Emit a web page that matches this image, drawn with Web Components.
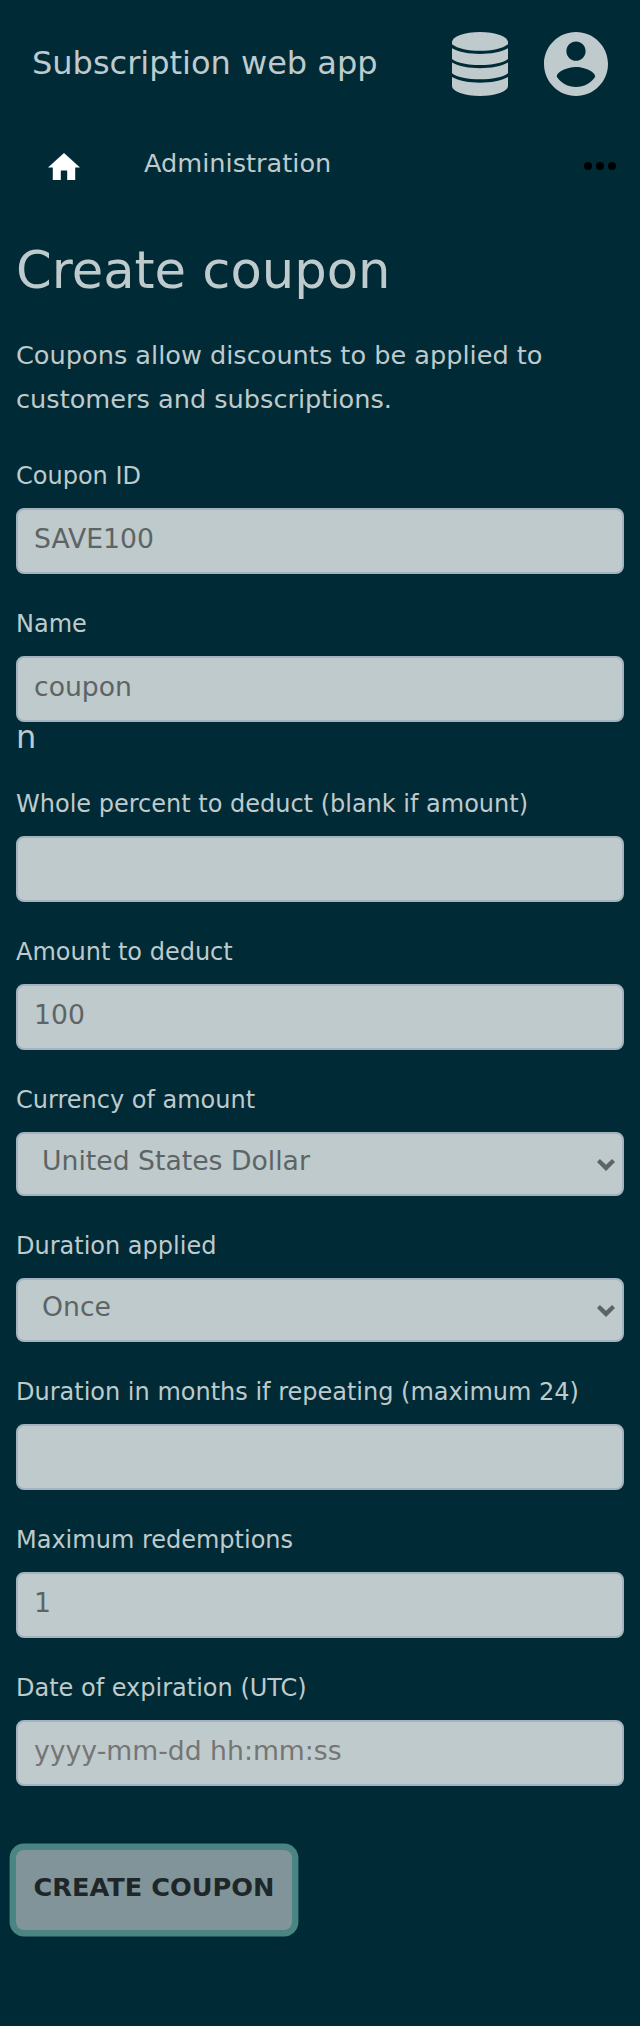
<!DOCTYPE html>
<html lang="en">
<head>
<meta charset="utf-8">
<title>Create coupon</title>
<style>
html{background:#002b36}
body{margin:0;background:#002b36;color:#bfcacc;font-family:"DejaVu Sans",sans-serif}
</style>
</head>
<body>
<coupon-page></coupon-page>
<script>
class Base extends HTMLElement{
  constructor(){
    super();
    this.attachShadow({mode:'open'}).innerHTML=this.constructor.html;
  }
}
customElements.define('app-icon',class extends HTMLElement{
  connectedCallback(){
    if(this.shadowRoot)return;
    const icons={
      database:['0 0 56 64','<path d="M0 10A28 10 0 0 1 56 10V12.200C45 21 11 21 0 12.200Z"/><path d="M0 16.300C13 23.900 43 23.900 56 16.300V27C46 35 10 35 0 27Z"/><path d="M0 30.600C13 38.200 43 38.200 56 30.600V41.300C46 49.300 10 49.300 0 41.300Z"/><path d="M0 45C13 52.600 43 52.600 56 45V54A28 10 0 0 1 0 54Z"/>'],
      account:['2 2 20 20','<path d="M12 2C6.480 2 2 6.480 2 12s4.480 10 10 10 10-4.480 10-10S17.520 2 12 2zm0 3c1.660 0 3 1.340 3 3s-1.340 3-3 3-3-1.340-3-3 1.340-3 3-3zm0 14.200c-2.500 0-4.710-1.280-6-3.220.03-1.990 4-3.080 6-3.080 1.990 0 5.970 1.090 6 3.080-1.290 1.940-3.500 3.220-6 3.220z"/>'],
      home:['2 3 20 17','<path d="M10 20v-6h4v6h5v-8h3L12 3 2 12h3v8z"/>'],
      more:['0 0 32 8','<circle cx="4" cy="4" r="4"/><circle cx="16" cy="4" r="4"/><circle cx="28" cy="4" r="4"/>'],
      chevron:['0 0 18 12','<path d="M0 3 2.900 0 9 5.700 15.100 0 18 3 9 12Z"/>']
    };
    const [box,shape]=icons[this.getAttribute('name')];
    this.attachShadow({mode:'open'}).innerHTML=`<style>:host{display:block;flex:none}svg{display:block;width:100%;height:100%;fill:currentColor}</style><svg viewBox="${box}" preserveAspectRatio="none" aria-hidden="true">${shape}</svg>`;
  }
});
customElements.define('app-header',class extends Base{
  static html=`<style>
  :host{display:flex;align-items:center;height:128px;padding:0 32px;box-sizing:border-box}
  .title{flex:1;font-size:32px;line-height:126px;height:128px}
  .db{width:56px;height:64px;margin-right:36px}.acc{width:64px;height:64px}
  </style><div class="title"><slot></slot></div><app-icon class="db" name="database"></app-icon><app-icon class="acc" name="account"></app-icon>`;
});
customElements.define('app-nav',class extends Base{
  static html=`<style>
  :host{display:flex;height:72px;padding:0 24px 0 48px;box-sizing:border-box}
  .home{width:32px;height:27.2px;color:#fff;margin-top:24.8px}
  .link{flex:1;margin-left:64px;font-size:25.6px;line-height:70px}
  .more{width:32px;height:8px;color:#000;margin-top:34px}
  </style><app-icon class="home" name="home"></app-icon><div class="link"><slot></slot></div><app-icon class="more" name="more"></app-icon>`;
});
customElements.define('form-field',class extends Base{
  static html=`<style>
  :host{display:block;margin-bottom:28px}
  .label{font-size:24px;line-height:44px;height:54px}
  .box{display:flex;justify-content:space-between;box-sizing:border-box;height:66px;border:2px solid #a3b3bf;border-radius:8px;background:#bfcacc;color:#5d6465;font-size:26.667px;line-height:58px;padding:0 16px}
  :host([hint]) .box{color:#757575}
  app-icon{display:none;width:18px;height:12px;margin-top:25px}
  :host([select]) .box{height:64px;line-height:54px;padding:0 7px 0 24px}
  :host([select]) app-icon{display:block}
  ::slotted([slot=note]){display:block;font-size:32px;line-height:30px;height:32px}
  </style><div class="label"><slot name="label"></slot></div><div class="box"><slot></slot><app-icon name="chevron"></app-icon></div><slot name="note"></slot>`;
});
customElements.define('submit-button',class extends Base{
  static html=`<style>
  :host{display:block}
  button{display:block;width:276px;height:80px;margin:0;padding:0 0 6px;border:0;border-radius:8px;background:#80949a;color:#1f2628;box-shadow:0 0 0 6.4px #4a8583;font:bold 25.6px/74px "DejaVu Sans",sans-serif;text-transform:uppercase;white-space:nowrap}
  </style><button type="button"><slot></slot></button>`;
});
customElements.define('coupon-page',class extends Base{
  static html=`<style>
  :host{display:block;min-height:2026px;box-sizing:border-box}
  main{padding:0 16px}
  h1{margin:30px 0 23px;font-size:51.2px;font-weight:400;line-height:80px}
  p{margin:0 0 33px;font-size:25.6px;line-height:44px}
  submit-button{margin-top:64px}
  </style>
  <app-header>Subscription web app</app-header>
  <app-nav>Administration</app-nav>
  <main>
  <h1>Create coupon</h1>
  <p>Coupons allow discounts to be applied to customers and subscriptions.</p>
  <form-field><span slot="label">Coupon ID</span>SAVE100</form-field>
  <form-field><span slot="label">Name</span>coupon<span slot="note">n</span></form-field>
  <form-field><span slot="label">Whole percent to deduct (blank if amount)</span></form-field>
  <form-field><span slot="label">Amount to deduct</span>100</form-field>
  <form-field select><span slot="label">Currency of amount</span>United States Dollar</form-field>
  <form-field select><span slot="label">Duration applied</span>Once</form-field>
  <form-field><span slot="label">Duration in months if repeating (maximum 24)</span></form-field>
  <form-field><span slot="label">Maximum redemptions</span>1</form-field>
  <form-field hint><span slot="label">Date of expiration (UTC)</span>yyyy-mm-dd hh:mm:ss</form-field>
  <submit-button>Create coupon</submit-button>
  </main>`;
});
</script>
</body>
</html>
